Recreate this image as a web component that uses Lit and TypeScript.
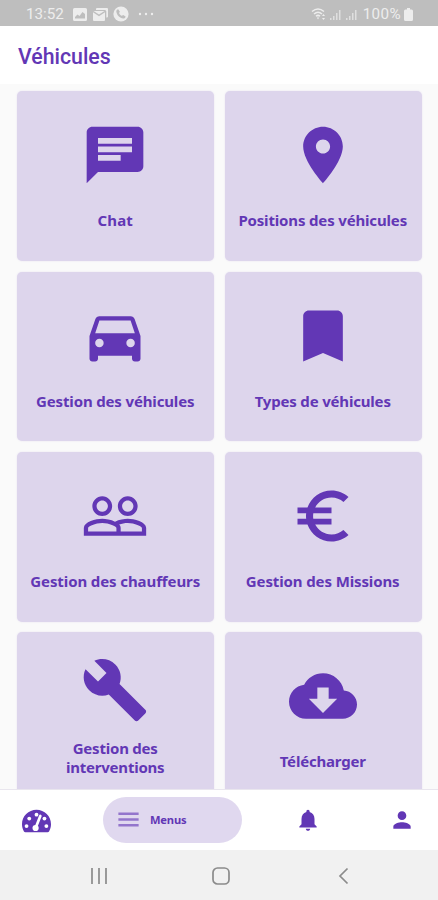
import { LitElement, html, css, svg } from "lit";
import { customElement, property } from "lit/decorators.js";

const ICONS: Record<string, string> = {
  chat: "M20 2H4c-1.1 0-1.99.9-1.99 2L2 22l4-4h14c1.1 0 2-.9 2-2V4c0-1.1-.9-2-2-2zM6 9h12v2H6V9zm8 5H6v-2h8v2zm4-6H6V6h12v2z",
  place: "M12 2C8.13 2 5 5.13 5 9c0 5.25 7 13 7 13s7-7.75 7-13c0-3.87-3.13-7-7-7zm0 9.5c-1.38 0-2.5-1.12-2.5-2.5s1.12-2.5 2.5-2.5 2.5 1.12 2.5 2.5-1.12 2.5-2.5 2.5z",
  car: "M18.92 6.01C18.72 5.42 18.16 5 17.5 5h-11c-.66 0-1.21.42-1.42 1.01L3 12v8c0 .55.45 1 1 1h1c.55 0 1-.45 1-1v-1h12v1c0 .55.45 1 1 1h1c.55 0 1-.45 1-1v-8l-2.08-5.99zM6.5 16c-.83 0-1.5-.67-1.5-1.5S5.67 13 6.5 13s1.5.67 1.5 1.5S7.33 16 6.5 16zm11 0c-.83 0-1.5-.67-1.5-1.5s.67-1.5 1.5-1.5 1.5.67 1.5 1.5-.67 1.5-1.5 1.5zM5 11l1.5-4.5h11L19 11H5z",
  bookmark: "M17 3H7c-1.1 0-1.99.9-1.99 2L5 21l7-3 7 3V5c0-1.1-.9-2-2-2z",
  people: "M16.5 13c-1.2 0-3.07.34-4.5 1-1.43-.67-3.3-1-4.5-1C5.33 13 1 14.08 1 16.25V19h22v-2.75c0-2.17-4.33-3.25-6.5-3.25zm-4 4.5h-10v-1.25c0-.54 2.56-1.75 5-1.75s5 1.21 5 1.75v1.25zm9 0H14v-1.25c0-.46-.2-.86-.52-1.22.88-.3 1.96-.53 3.02-.53 2.44 0 5 1.21 5 1.75v1.25zM7.5 12c1.93 0 3.5-1.57 3.5-3.5S9.43 5 7.5 5 4 6.57 4 8.5 5.57 12 7.5 12zm0-5.5c1.1 0 2 .9 2 2s-.9 2-2 2-2-.9-2-2 .9-2 2-2zm9 5.5c1.93 0 3.5-1.57 3.5-3.5S18.43 5 16.5 5 13 6.57 13 8.5s1.57 3.5 3.5 3.5zm0-5.5c1.1 0 2 .9 2 2s-.9 2-2 2-2-.9-2-2 .9-2 2-2z",
  euro: "M15 18.5c-2.51 0-4.68-1.42-5.76-3.5H15v-2H8.58c-.05-.33-.08-.66-.08-1s.03-.67.08-1H15V9H9.24C10.32 6.92 12.5 5.5 15 5.5c1.61 0 3.09.59 4.23 1.57L21 5.3C19.41 3.87 17.3 3 15 3c-3.92 0-7.24 2.51-8.48 6H3v2h3.06c-.04.33-.06.66-.06 1s.02.67.06 1H3v2h3.52c1.24 3.49 4.56 6 8.48 6 2.31 0 4.41-.87 6-2.3l-1.78-1.77c-1.13.98-2.6 1.57-4.22 1.57z",
  build: "M22.7 19l-9.1-9.1c.9-2.3.4-5-1.5-6.9-2-2-5-2.4-7.4-1.3L9 6 6 9 1.6 4.7C.4 7.1.9 10.1 2.9 12.1c1.9 1.9 4.6 2.4 6.9 1.5l9.1 9.1c.4.4 1 .4 1.4 0l2.3-2.3c.5-.4.5-1.1.1-1.4z",
  cloud: "M19.35 10.04C18.67 6.59 15.64 4 12 4 9.11 4 6.6 5.64 5.35 8.04 2.34 8.36 0 10.91 0 14c0 3.31 2.69 6 6 6h13c2.76 0 5-2.24 5-5 0-2.64-2.05-4.78-4.65-4.96zM17 13l-5 5-5-5h3V9h4v4h3z",
  menu: "M3 18.2h18v-2.3H3v2.3zm0-5h18v-2.3H3v2.3zm0-7.4v2.3h18V5.8H3z",
  bell: "M12 22c1.1 0 2-.9 2-2h-4c0 1.1.89 2 2 2zm6-6v-5c0-3.07-1.64-5.64-4.5-6.32V4c0-.83-.67-1.5-1.5-1.5s-1.5.67-1.5 1.5v.68C7.63 5.36 6 7.92 6 11v5l-2 2v1h16v-1l-2-2z",
  person: "M12 12c2.21 0 4-1.79 4-4s-1.79-4-4-4-4 1.79-4 4 1.79 4 4 4zm0 2c-2.67 0-8 1.34-8 4v2h16v-2c0-2.66-5.33-4-8-4z",
};

@customElement("md-icon")
class MdIcon extends LitElement {
  @property() name = "";
  static styles = css`
    :host { display: block; flex: none; }
    svg { display: block; width: 100%; height: 100%; fill: currentColor; }
  `;
  render() {
    return html`<svg viewBox="0 0 24 24"><path d=${ICONS[this.name] ?? ""} /></svg>`;
  }
}

@customElement("menu-card")
class MenuCard extends LitElement {
  @property() icon = "";
  @property() label = "";
  @property({ type: Number }) spacing = 0;
  static styles = css`
    :host {
      display: flex; flex-direction: column; align-items: center;
      height: 169.6px; box-sizing: border-box; padding: 30px 0.6px 0 0;
      border-radius: 5px; background: #ddd5ec; color: #6237b5;
      box-shadow: 0 0 2px rgba(98, 55, 181, 0.12);
    }
    :host([tall]) { padding-top: 24px; }
    .icon { width: 68px; height: 68px; }
    .label {
      margin-top: 22px; text-align: center; white-space: pre-line;
      font: 700 15px/19px "Noto Sans", sans-serif;
    }
    :host([tall]) .label { margin-top: 15px; }
  `;
  render() {
    return html`
      <md-icon class="icon" name=${this.icon}></md-icon>
      <div class="label" style="letter-spacing:${this.spacing}px">${this.label}</div>
    `;
  }
}

const CARDS = [
  { icon: "chat", label: "Chat", spacing: 0.1 },
  { icon: "place", label: "Positions des véhicules", spacing: -0.16 },
  { icon: "car", label: "Gestion des véhicules", spacing: -0.15 },
  { icon: "bookmark", label: "Types de véhicules", spacing: -0.18 },
  { icon: "people", label: "Gestion des chauffeurs", spacing: -0.1 },
  { icon: "euro", label: "Gestion des Missions", spacing: -0.12 },
  { icon: "build", label: "Gestion des\ninterventions", spacing: -0.22, tall: true },
  { icon: "cloud", label: "Télécharger", spacing: -0.2 },
];

const signal = svg`<path d="M1 10h1.5v2H1zM4 8h1.5v4H4zM7 5h1.5v7H7zM10 2h1.5v10H10z"/>`;

@customElement("app-root")
class AppRoot extends LitElement {
  static styles = css`
    :host {
      display: flex; flex-direction: column; height: 900px; overflow: hidden;
      background: #fafafa; font-family: Roboto, sans-serif; color: #6237b5;
    }
    .status {
      height: 26px; flex: none; background: #bebebe; color: #ededed;
      display: flex; align-items: center; box-sizing: border-box;
      padding: 2px 25px 0 26px; font-size: 15.2px;
    }
    .status svg { fill: currentColor; display: block; flex: none; }
    .time { width: 47px; }
    .picture { margin-right: 6px; }
    .mail { margin-right: 5px; }
    .phone { margin-right: 9px; }
    .spacer { flex: 1; }
    .wifi { margin-right: 2px; }
    .signal { margin-right: 3px; opacity: 0.7; }
    .percent { margin: 0 3px 0 2px; letter-spacing: 0.4px; }
    .header {
      height: 58px; flex: none; background: #fff; box-sizing: border-box;
      padding: 17px 18px 0; font: 500 21.3px/28px Roboto, sans-serif;
    }
    .grid {
      flex: 1; min-height: 0; overflow: hidden; box-sizing: border-box;
      display: grid; grid-template-columns: 1fr 1fr; align-content: start;
      gap: 10.8px 10.5px; padding: 7.2px 16.5px 0 17px;
    }
    .nav {
      height: 61px; flex: none; box-sizing: border-box; background: #fff;
      border-top: 1px solid #e9e6ee; display: flex; align-items: center;
      padding: 0 23px 0 21.5px;
    }
    .gauge { width: 29px; height: 24px; display: block; fill: currentColor; margin-top: 2px; }
    .gauge .cut { fill: #fff; }
    .gauge .needle { stroke: #fff; stroke-width: 54; stroke-linecap: round; }
    .pill {
      margin-left: 52.5px; width: 139px; height: 46.5px; border-radius: 24px;
      box-sizing: border-box; padding: 0 0 1px 12px; background: #e0d8ef;
      display: flex; align-items: center;
      font: 700 11.2px "Noto Sans", sans-serif; letter-spacing: -0.2px;
    }
    .burger { width: 27px; height: 27px; color: #9375cc; margin-right: 8px; }
    .bell { width: 26px; height: 26px; margin-left: 53px; }
    .person { width: 26px; height: 26px; margin-left: auto; }
    .system {
      height: 50px; flex: none; background: #f1f1f1; display: grid;
      grid-template-columns: repeat(3, 122.5px); justify-content: center;
      justify-items: center; align-items: center; padding: 1px 0 0 4.5px;
      box-sizing: border-box;
    }
    .system svg { display: block; fill: none; stroke: #8b8b8b; stroke-width: 1.7; }
  `;

  render() {
    return html`
      <div class="status">
        <span class="time">13:52</span>
        <svg class="picture" width="14" height="13" viewBox="0 0 14 13"><path fill-rule="evenodd" d="M1.5 0h11A1.5 1.5 0 0 1 14 1.5v10a1.5 1.5 0 0 1-1.5 1.5h-11A1.5 1.5 0 0 1 0 11.5v-10A1.5 1.5 0 0 1 1.5 0zM2 10.5h10V6L9.5 4 6.5 8 4.5 6.5 2 9z"/></svg>
        <svg class="mail" width="15" height="13" viewBox="0 0 15 13"><path d="M4 0h10a1 1 0 0 1 1 1v7.5a1 1 0 0 1-1 1h-.7V3.5a1.500 1.500 0 0 0-1.500-1.500H3V1a1 1 0 0 1 1-1z"/><path d="M0 4.300l6 3.900 6-3.900V12a1 1 0 0 1-1 1H1a1 1 0 0 1-1-1zM.5 3h11L6 6.600z"/></svg>
        <svg class="phone" width="16" height="16" viewBox="0 0 16 16"><circle cx="8" cy="8" r="7.6"/><path fill="#bebebe" d="M5.200 3.200l1.700 2.500-.9 1.200c.6 1.300 1.600 2.300 2.900 2.900l1.300-.9 2.400 1.700c-.2 1.400-1.100 2-2.300 2C6.800 12 3.700 9 3.300 5.400c0-1.200.7-2 1.900-2.200z"/></svg>
        <svg width="17" height="4" viewBox="0 0 17 4"><circle cx="2" cy="2" r="1.2"/><circle cx="8" cy="2" r="1.2"/><circle cx="14" cy="2" r="1.2"/></svg>
        <span class="spacer"></span>
        <svg class="wifi" width="16" height="14" viewBox="0 0 16 14"><path fill="none" stroke="currentColor" stroke-width="1.5" d="M1 4.500Q7 -.5 13 4.500M3 7Q7 3.500 11 7M5 9.300Q7 7.500 9 9.300"/><path d="M5.800 10.400h2.400L7 12.500zM11 9l1.500-2L14 9zM11 11l1.500 2L14 11z"/></svg>
        <svg class="signal" width="13" height="13" viewBox="0 0 13 13">${signal}</svg>
        <svg class="signal" width="13" height="13" viewBox="0 0 13 13">${signal}</svg>
        <span class="percent">100%</span>
        <svg width="9" height="13" viewBox="0 0 9 13"><path d="M3 0h3v1.500h1.500A1.500 1.500 0 0 1 9 3v8.500A1.500 1.500 0 0 1 7.500 13h-6A1.500 1.500 0 0 1 0 11.500V3a1.500 1.500 0 0 1 1.500-1.500H3z"/></svg>
      </div>
      <div class="header">Véhicules</div>
      <div class="grid">
        ${CARDS.map(
          (c) => html`<menu-card icon=${c.icon} label=${c.label} .spacing=${c.spacing} ?tall=${c.tall}></menu-card>`
        )}
      </div>
      <div class="nav">
        <svg class="gauge" viewBox="0 16 576 480" preserveAspectRatio="none">
          <path d="M288 32C128.940 32 0 160.940 0 320c0 52.800 14.250 102.260 39.060 144.800 5.610 9.620 16.300 15.200 27.440 15.200h443c11.140 0 21.830-5.580 27.440-15.200C561.750 422.260 576 372.800 576 320c0-159.060-128.940-288-288-288z"/>
          <g class="cut">
            <circle cx="288" cy="130" r="38"/><circle cx="144" cy="208" r="38"/>
            <circle cx="90" cy="358" r="38"/><circle cx="446" cy="208" r="38"/>
            <circle cx="484" cy="358" r="38"/><circle cx="270" cy="396" r="62"/>
          </g>
          <path class="needle" d="M276 380L364 156"/>
        </svg>
        <div class="pill"><md-icon class="burger" name="menu"></md-icon><span>Menus</span></div>
        <md-icon class="bell" name="bell"></md-icon>
        <md-icon class="person" name="person"></md-icon>
      </div>
      <div class="system">
        <svg width="18" height="18" viewBox="0 0 18 18"><path d="M2 1v16M9 1v16M16 1v16"/></svg>
        <svg width="20" height="20" viewBox="0 0 20 20"><rect x="2" y="2" width="16" height="16" rx="4.5"/></svg>
        <svg width="18" height="18" viewBox="0 0 18 18"><path d="M12.500 1.500L5 9l7.500 7.500"/></svg>
      </div>
    `;
  }
}
